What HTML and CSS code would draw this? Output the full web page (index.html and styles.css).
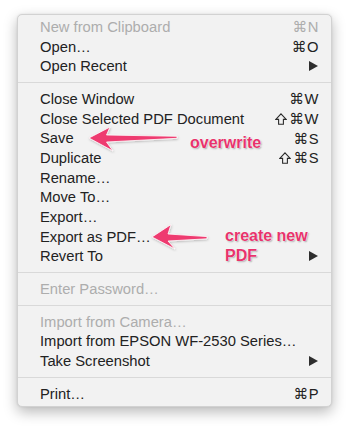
FILE: index.html
```html
<!DOCTYPE html>
<html>
<head>
<meta charset="utf-8">
<link rel="stylesheet" href="styles.css">
</head>
<body>
<div class="stage">
  <div class="menu">
    <div class="item disabled"><span>New from Clipboard</span><span class="key">⌘N</span></div>
    <div class="item"><span>Open…</span><span class="key">⌘O</span></div>
    <div class="item"><span>Open Recent</span><span class="sub"></span></div>
    <div class="sep"></div>
    <div class="item"><span>Close Window</span><span class="key">⌘W</span></div>
    <div class="item"><span>Close Selected PDF Document</span><span class="key"><svg class="shift" width="12" height="12" viewBox="0 0 12 12"><path d="M6 0.8 L11.2 6.4 L8.4 6.4 L8.4 11.2 L3.6 11.2 L3.6 6.4 L0.8 6.4 Z" fill="none" stroke="#2a2a2a" stroke-width="1.1" stroke-linejoin="miter"/></svg>⌘W</span></div>
    <div class="item"><span>Save</span><span class="key">⌘S</span></div>
    <div class="item"><span>Duplicate</span><span class="key"><svg class="shift" width="12" height="12" viewBox="0 0 12 12"><path d="M6 0.8 L11.2 6.4 L8.4 6.4 L8.4 11.2 L3.6 11.2 L3.6 6.4 L0.8 6.4 Z" fill="none" stroke="#2a2a2a" stroke-width="1.1" stroke-linejoin="miter"/></svg>⌘S</span></div>
    <div class="item"><span>Rename…</span></div>
    <div class="item"><span>Move To…</span></div>
    <div class="item"><span>Export…</span></div>
    <div class="item"><span>Export as PDF…</span></div>
    <div class="item"><span>Revert To</span><span class="sub"></span></div>
    <div class="sep"></div>
    <div class="item disabled"><span>Enter Password…</span></div>
    <div class="sep"></div>
    <div class="item disabled"><span>Import from Camera…</span></div>
    <div class="item"><span>Import from EPSON WF-2530 Series…</span></div>
    <div class="item"><span>Take Screenshot</span><span class="sub"></span></div>
    <div class="sep"></div>
    <div class="item"><span>Print…</span><span class="key">⌘P</span></div>
  </div>
  <svg class="arrows" width="350" height="429" viewBox="0 0 350 429">
    <defs>
      <filter id="glow" x="-20%" y="-40%" width="140%" height="180%">
        <feDropShadow dx="0.5" dy="1" stdDeviation="0.8" flood-color="#000" flood-opacity="0.25"/>
      </filter>
    </defs>
    <g fill="#ee3a6f" stroke="#fff" stroke-width="0.8" stroke-linejoin="round" filter="url(#glow)">
      <path d="M89 138 L110 127 L106.5 135 L177 136.3 L177 138.3 L106.5 142 L113 151 Z"/>
      <path d="M152 237 L171 224.5 L168 234 L207 236.6 L207 238.8 L168 241 L175 249 Z"/>
    </g>
  </svg>
  <div class="note note-overwrite">overwrite</div>
  <div class="note note-create">create new<br>PDF</div>
</div>
</body>
</html>
```
FILE: styles.css
```css
html, body {
  margin: 0;
  padding: 0;
  background: #ffffff;
}
.stage {
  position: relative;
  width: 350px;
  height: 429px;
  overflow: hidden;
  padding-top: 14px;
  box-sizing: border-box;
}
.menu {
  margin-left: 17px;
  width: 315px;
  box-sizing: border-box;
  background: #f2f2f2;
  border: 1px solid #d2d2d2;
  border-radius: 5px;
  box-shadow: 0 5px 14px rgba(0, 0, 0, 0.28), 0 0 2px rgba(0, 0, 0, 0.1);
  padding: 2px 0 2px 0;
  font-family: "Liberation Sans", Arial, "DejaVu Sans", sans-serif;
  font-size: 14.75px;
  color: #222222;
}
.item {
  display: flex;
  justify-content: space-between;
  align-items: center;
  height: 19.7px;
  padding: 0 12px 0 22px;
  white-space: nowrap;
}
.item.disabled {
  color: #adadad;
}
.key {
  display: flex;
  align-items: center;
  font-family: "Liberation Sans", "DejaVu Sans", sans-serif;
  letter-spacing: 0.5px;
}
.shift {
  display: block;
  margin-right: 2px;
}
.sub {
  width: 0;
  height: 0;
  border-top: 5px solid transparent;
  border-bottom: 5px solid transparent;
  border-left: 9px solid #2e2e2e;
  margin-right: 1px;
}
.sep {
  height: 1px;
  background: #d9d9d9;
  margin: 6px 0 6px 0;
}
.arrows {
  position: absolute;
  left: 0;
  top: 0;
}
.note {
  position: absolute;
  font-family: "Liberation Sans", Arial, sans-serif;
  font-weight: bold;
  font-size: 16px;
  line-height: 20px;
  color: #e8336c;
  text-shadow: 0 0 1px #fff, 0 0 2px #fff, 1px 1px 1.5px rgba(0, 0, 0, 0.35);
}
.note-overwrite {
  left: 190px;
  top: 133px;
}
.note-create {
  left: 225px;
  top: 226px;
}
```
